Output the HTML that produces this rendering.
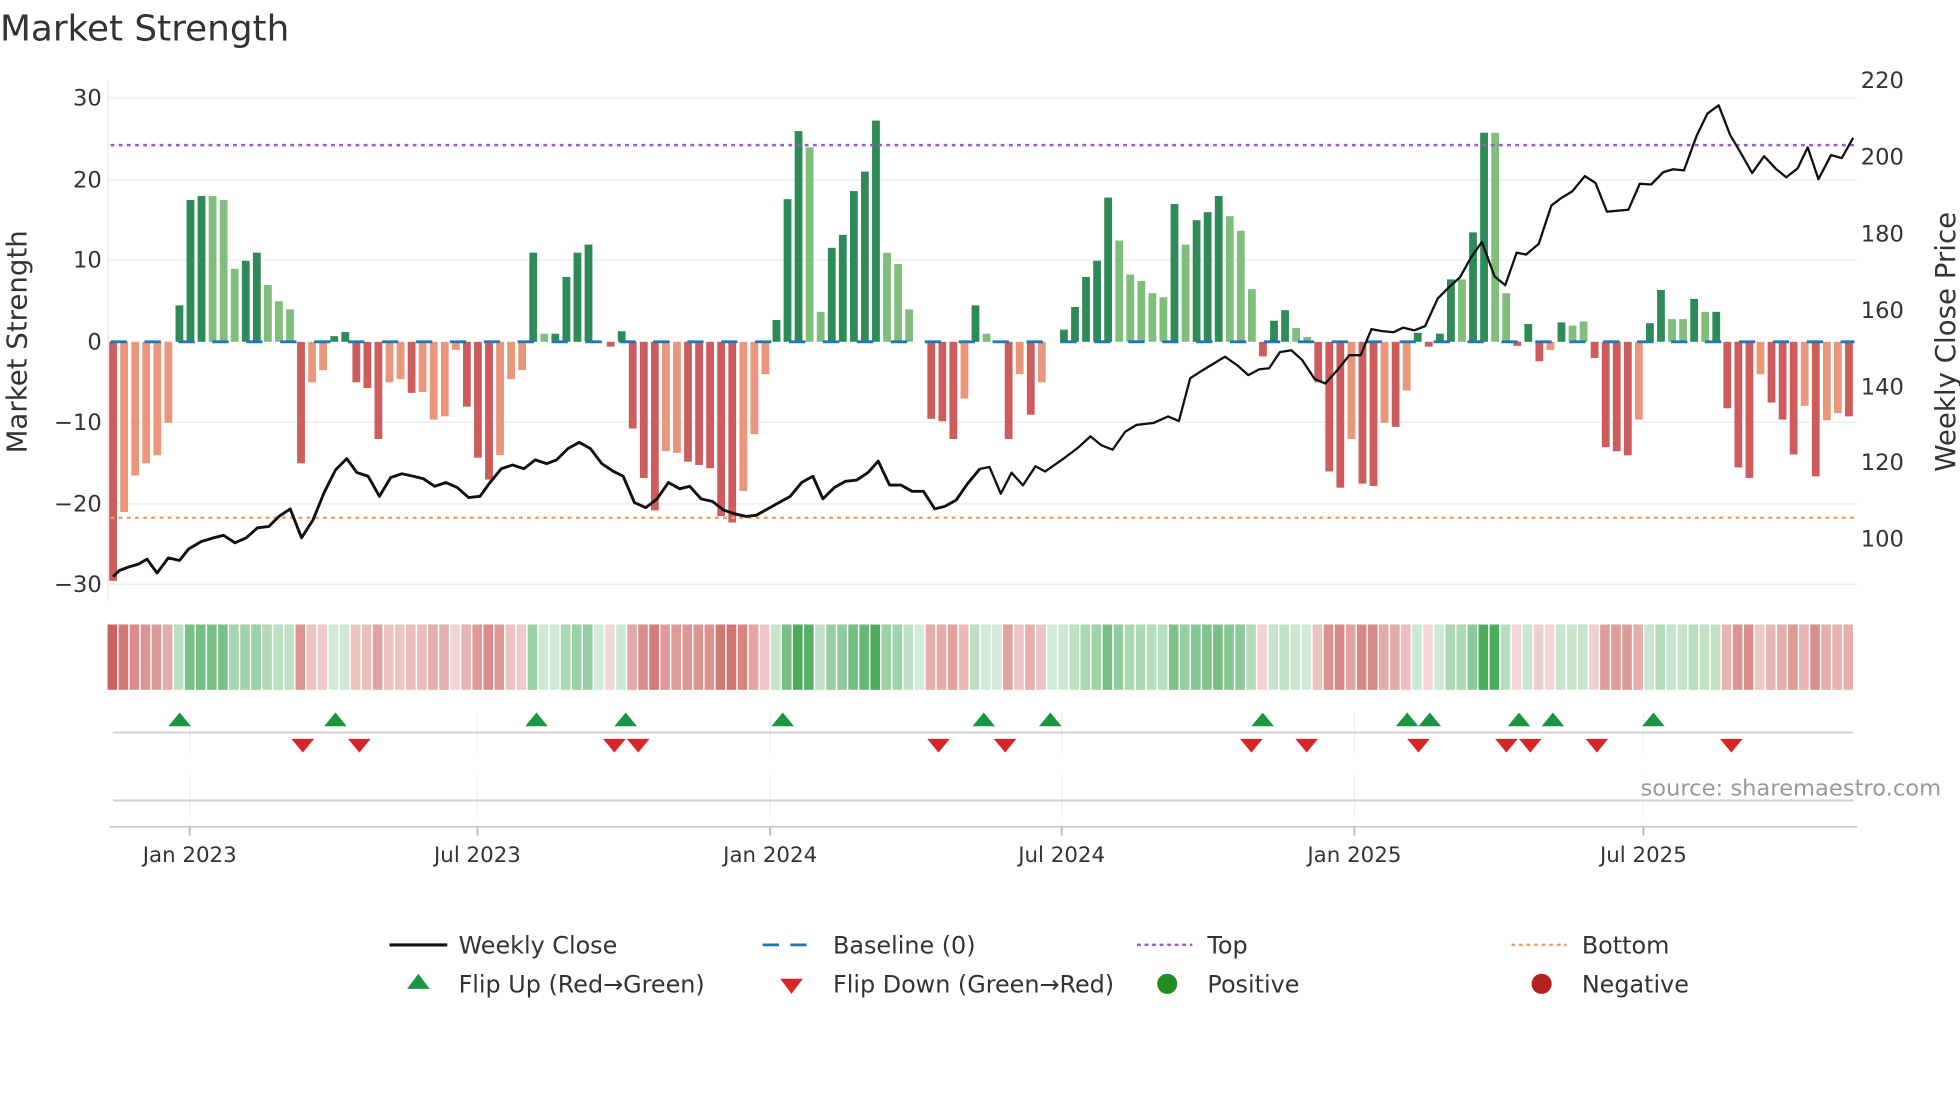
<!DOCTYPE html>
<html><head><meta charset="utf-8"><style>
html,body{margin:0;padding:0;background:#fff;}
svg{display:block;}
text{font-family:"DejaVu Sans","Liberation Sans",sans-serif;fill:#333;}
</style></head><body>
<svg id="s" width="1960" height="1102" viewBox="0 0 1560 877" xmlns="http://www.w3.org/2000/svg">
<text x="0" y="32" font-size="28.5">Market Strength</text>
<g stroke="#ebecf0" stroke-width="1">
<line x1="87" x2="1478" y1="78" y2="78"/><line x1="87" x2="1478" y1="143" y2="143"/><line x1="87" x2="1478" y1="207" y2="207"/><line x1="87" x2="1478" y1="336" y2="336"/><line x1="87" x2="1478" y1="401" y2="401"/><line x1="87" x2="1478" y1="465" y2="465"/>
</g>
<line x1="86" x2="86" y1="64" y2="478" stroke="#e6e6e6"/>
<g font-size="18" text-anchor="end">
<text x="81" y="84">30</text><text x="81" y="149">20</text><text x="81" y="213">10</text><text x="81" y="278">0</text><text x="81" y="342">−10</text><text x="81" y="407">−20</text><text x="81" y="471">−30</text>
</g>
<g font-size="18">
<text x="1481" y="70">220</text><text x="1481" y="131">200</text><text x="1481" y="192">180</text><text x="1481" y="253">160</text><text x="1481" y="314">140</text><text x="1481" y="374">120</text><text x="1481" y="435">100</text>
</g>
<text font-size="22" transform="translate(21,272) rotate(-90)" text-anchor="middle">Market Strength</text>
<text font-size="22" transform="translate(1556,272) rotate(-90)" text-anchor="middle">Weekly Close Price</text>
<g id="bars"></g>
<line x1="88" x2="1476" y1="272" y2="272" stroke="#1f77b4" stroke-width="2.2" stroke-dasharray="13,14"/>
<line x1="88" x2="1476" y1="115.5" y2="115.5" stroke="#9b59d6" stroke-width="2" stroke-dasharray="3,3.5"/>
<line x1="88" x2="1476" y1="412" y2="412" stroke="#f0a060" stroke-width="2" stroke-dasharray="3,3.5"/>
<polyline fill="none" stroke="#111" stroke-width="2.3" stroke-linejoin="round" points="90,459 95,454 103,451 110,449 117,445 125,456 134,444 143,446 150,437 160,431 170,428 178,426 187,432 196,428 205,420 214,419 222,411 231,405 240,428 249,414 258,392 267,374 276,365 284,376 293,379 302,395 311,380 320,377 329,379 337,381 346,387 355,384 364,388 373,396 382,395 390,384 399,373 408,370 417,373 426,366 435,369 443,366 452,357 461,352 470,357 479,369 488,375 496,379 505,400 514,404 523,397 532,384 541,389 549,387 558,397 567,399 576,406 585,409 594,411 602,410 611,405 620,400 629,395 638,384 647,379 655,397 664,388 673,383 682,382 691,376 699,367 708,386 717,386 726,391 735,391 744,405 752,403 761,398 770,385 780,373"/>
<g transform="translate(780,0) scale(0.5025,0.3046)">
<polyline fill="none" stroke="#111" stroke-width="2.3" stroke-linejoin="round" vector-effect="non-scaling-stroke" points="0,1225 15,1220 33,1290 50,1235 68,1268 88,1218 103,1232 135,1195 155,1170 175,1140 192,1163 210,1175 230,1128 248,1110 275,1105 298,1088 315,1100 333,988 350,970 388,932 408,955 425,980 442,965 458,962 475,920 493,915 510,940 530,990 547,1002 567,965 585,928 603,928 620,860 637,865 655,868 670,856 688,863 705,852 725,780 743,750 760,725 778,672 795,632 815,722 832,745 850,660 865,665 885,637 905,537 920,518 938,500 958,460 975,478 993,553 1027,548 1045,480 1063,482 1082,450 1098,442 1115,445 1135,355 1152,297 1170,275 1188,352 1207,405 1223,452 1242,408 1260,440 1277,463 1295,440 1311,385 1328,468 1348,405 1365,413 1383,360"/>
</g>
<g id="heat"></g>
<g stroke="#eef0f4" stroke-width="1">
<line x1="151" x2="151" y1="567" y2="600"/><line x1="380" x2="380" y1="567" y2="600"/><line x1="613" x2="613" y1="567" y2="600"/><line x1="845" x2="845" y1="567" y2="600"/><line x1="1078" x2="1078" y1="567" y2="600"/><line x1="1308" x2="1308" y1="567" y2="600"/>
<line x1="151" x2="151" y1="617" y2="650"/><line x1="380" x2="380" y1="617" y2="650"/><line x1="613" x2="613" y1="617" y2="650"/><line x1="845" x2="845" y1="617" y2="650"/><line x1="1078" x2="1078" y1="617" y2="650"/><line x1="1308" x2="1308" y1="617" y2="650"/>
</g>
<line x1="90" x2="1475" y1="583" y2="583" stroke="#d0d0d0" stroke-width="1.5"/>
<line x1="90" x2="1475" y1="637" y2="637" stroke="#d0d0d0" stroke-width="1.5"/>
<line x1="87" x2="1478" y1="658" y2="658" stroke="#cfcfcf" stroke-width="1.5"/>
<g stroke="#bbb" stroke-width="1.5">
<line x1="151" x2="151" y1="658" y2="665"/><line x1="380" x2="380" y1="658" y2="665"/><line x1="613" x2="613" y1="658" y2="665"/><line x1="845" x2="845" y1="658" y2="665"/><line x1="1078" x2="1078" y1="658" y2="665"/><line x1="1308" x2="1308" y1="658" y2="665"/>
</g>
<g font-size="17" text-anchor="middle">
<text x="151" y="686">Jan 2023</text><text x="380" y="686">Jul 2023</text><text x="613" y="686">Jan 2024</text><text x="845" y="686">Jul 2024</text><text x="1078" y="686">Jan 2025</text><text x="1308" y="686">Jul 2025</text>
</g>
<g id="flips"></g>
<text x="1545" y="633" font-size="18" text-anchor="end" style="fill:#999">source: sharemaestro.com</text>
<g font-size="19">
<line x1="310" x2="356" y1="752" y2="752" stroke="#111" stroke-width="2.5"/>
<text x="365" y="759">Weekly Close</text>
<line x1="607" x2="651" y1="752" y2="752" stroke="#1f77b4" stroke-width="2.2" stroke-dasharray="13,9"/>
<text x="663" y="759">Baseline (0)</text>
<line x1="905" x2="949" y1="752" y2="752" stroke="#9b59d6" stroke-width="2" stroke-dasharray="3,3"/>
<text x="961" y="759">Top</text>
<line x1="1203" x2="1247" y1="752" y2="752" stroke="#f0a060" stroke-width="2" stroke-dasharray="3,3"/>
<text x="1259" y="759">Bottom</text>
<polygon points="324,787 342,787 333,775" fill="#1a9641"/>
<text x="365" y="790">Flip Up (Red→Green)</text>
<polygon points="621,779 639,779 630,791" fill="#d62728"/>
<text x="663" y="790">Flip Down (Green→Red)</text>
<circle cx="929" cy="783" r="8" fill="#228b22"/>
<text x="961" y="790">Positive</text>
<circle cx="1227" cy="783" r="8" fill="#b22222"/>
<text x="1259" y="790">Negative</text>
</g>
</svg>
<script>
var V=[[-29.5,1],[-21,0],[-16.5,0],[-15,0],[-14,0],[-10,0],[4.5,1],[17.5,1],[18,1],[18,0],[17.5,0],[9,0],[10,1],[11,1],[7,0],[5,0],[4,0],[-15,1],[-5,0],[-3.5,0],[0.7,1],[1.2,1],[-5,1],[-5.7,1],[-12,1],[-5,0],[-4.6,0],[-6.3,1],[-6.2,0],[-9.6,0],[-9.2,0],[-1,0],[-8,1],[-14.3,1],[-17,1],[-14,0],[-4.6,0],[-3.5,0],[11,1],[1,0],[1,1],[8,1],[11,1],[12,1],[0,1],[-0.6,1],[1.3,1],[-10.7,1],[-16.8,1],[-20.8,1],[-13.5,0],[-13.7,0],[-14.8,1],[-15.2,1],[-15.6,1],[-21.5,1],[-22.3,1],[-18.4,0],[-11.4,0],[-4,0],[2.7,1],[17.6,1],[26,1],[24,0],[3.7,0],[11.6,1],[13.2,1],[18.6,1],[21,1],[27.3,1],[11,0],[9.6,0],[4,0],[0,1],[-9.5,1],[-9.8,1],[-12,1],[-7,0],[4.5,1],[1,0],[0,1],[-12,1],[-4,0],[-9,1],[-5,0],[0,1],[1.5,1],[4.3,1],[8,1],[10,1],[17.8,1],[12.5,0],[8.3,0],[7.5,0],[6,0],[5.5,0],[17,1],[12,0],[15,1],[16,1],[18,1],[15.5,0],[13.7,0],[6.5,0],[-1.8,1],[2.6,1],[3.9,1],[1.7,0],[0.6,0],[-5,1],[-16,1],[-18,1],[-12,0],[-17.5,1],[-17.8,1],[-10,0],[-10.5,1],[-6,0],[1.1,1],[-0.6,1],[1,1],[7.7,1],[7.7,0],[13.5,1],[25.8,1],[25.8,0],[6,0],[-0.5,1],[2.2,1],[-2.4,1],[-1,0],[2.4,1],[2,0],[2.5,0],[-2,1],[-13,1],[-13.5,1],[-14,1],[-9.6,0],[2.3,1],[6.4,1],[2.8,0],[2.8,0],[5.3,1],[3.7,0],[3.7,1],[-8.2,1],[-15.5,1],[-16.8,1],[-4,0],[-7.5,1],[-9.6,1],[-13.9,1],[-7.9,0],[-16.6,1],[-9.7,0],[-8.8,0],[-9.2,1]];
var NS="http://www.w3.org/2000/svg",b=document.getElementById('bars'),h=document.getElementById('heat');
function r(g,x,y,w,hh,f){var e=document.createElementNS(NS,'rect');e.setAttribute('x',x);e.setAttribute('y',y);e.setAttribute('width',w);e.setAttribute('height',hh);e.setAttribute('fill',f);g.appendChild(e);}
function mix(c,a){return 'rgb('+c.map(function(v){return Math.round(255+(v-255)*a)}).join(',')+')';}
for(var i=0;i<V.length;i++){var v=V[i][0],d=V[i][1],x=90+8.8*i;var hh=Math.abs(v)*6.45;
var col=v>=0?(d?'#2e8b57':'#7fbf7b'):(d?'#cd5c5c':'#e9967a');
if(hh>0.2)r(b,x-3.1,v>=0?272-hh:272,6.2,hh,col);
var a=0.22+0.7*Math.min(Math.abs(v)/26,1);
r(h,x-4.4,497,7.6,52,v>=0?mix([60,165,80],a):mix([200,85,80],a));}
var f=document.getElementById('flips');
[143,267,427,498,623,783,836,1005,1120,1138,1209,1236,1316].forEach(function(x){var p=document.createElementNS(NS,'polygon');p.setAttribute('points',(x-9)+',578 '+(x+9)+',578 '+x+',567');p.setAttribute('fill','#1a9641');f.appendChild(p);});
[241,286,489,508,747,800,996,1040,1129,1199,1218,1271,1378].forEach(function(x){var p=document.createElementNS(NS,'polygon');p.setAttribute('points',(x-9)+',588 '+(x+9)+',588 '+x+',599');p.setAttribute('fill','#d62728');f.appendChild(p);});
</script>
</body></html>
